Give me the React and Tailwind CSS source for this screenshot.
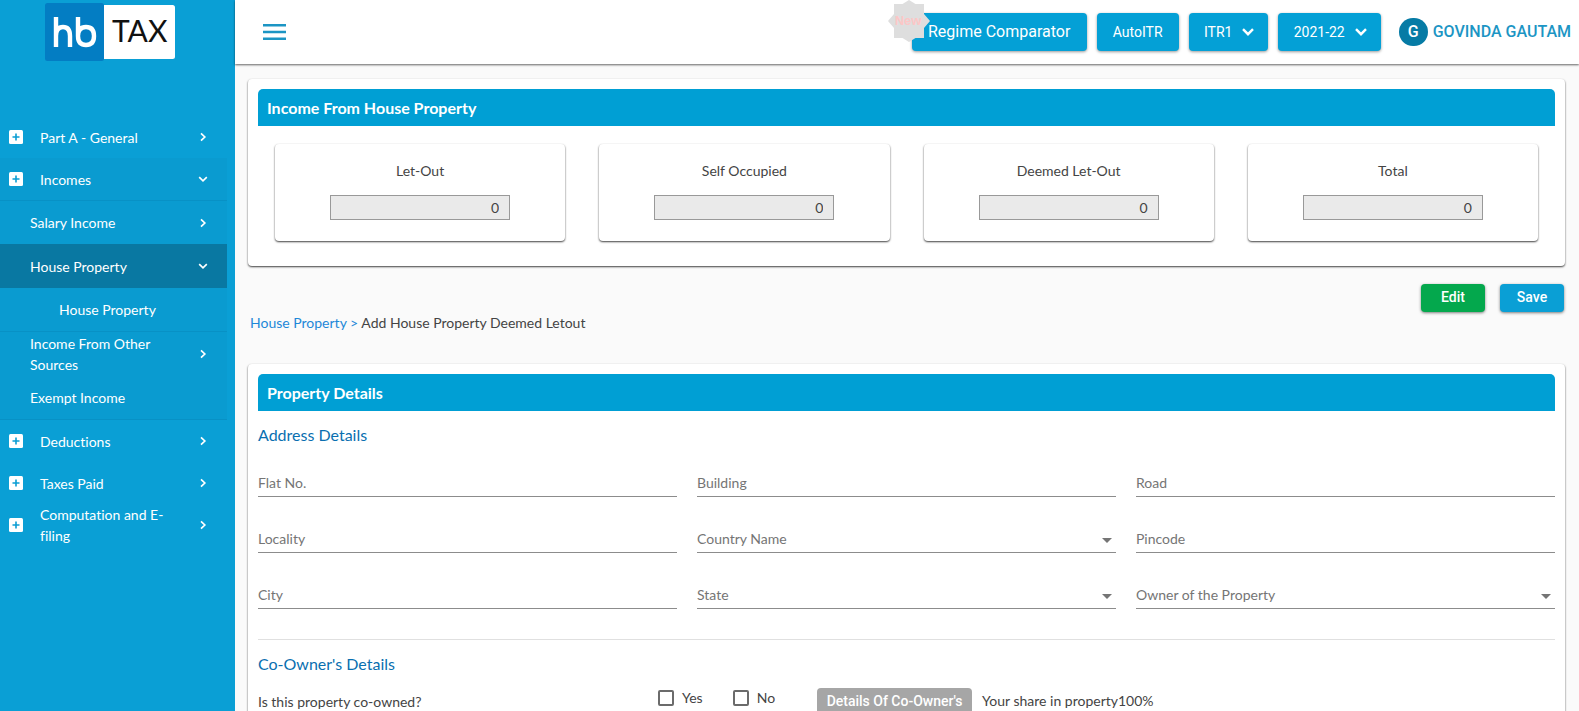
const LATO = "font-['Lato',sans-serif]";
const ROBOTO = "font-['Roboto',sans-serif]";

function PlusSquare() {
  return (
    <svg viewBox="0 0 14 14" className="h-3.5 w-3.5 shrink-0" aria-hidden="true">
      <rect width="14" height="14" rx="1.5" fill="#fff" />
      <path d="M7 3.5v7M3.5 7h7" stroke="#0a9dd3" strokeWidth="1.6" />
    </svg>
  );
}

function Chevron({ down }) {
  return (
    <svg viewBox="0 0 10 10" className="h-2.5 w-2.5 shrink-0" fill="none" stroke="#fff" strokeWidth="1.7" aria-hidden="true">
      {down ? <path d="M1.2 3.2 5 6.8l3.8-3.6" /> : <path d="M3 1.4 6.8 5 3 8.6" />}
    </svg>
  );
}

function NavItem({ label, icon, arrow, className }) {
  return (
    <li>
      <button
        type="button"
        className={"flex w-full items-center pr-[19px] text-left leading-[21px] text-white " + className}
      >
        {icon && (
          <span className="w-[31px] shrink-0">
            <PlusSquare />
          </span>
        )}
        <span className="w-[132px]">{label}</span>
        {arrow && (
          <span className="ml-auto">
            <Chevron down={arrow === "down"} />
          </span>
        )}
      </button>
    </li>
  );
}

function Sidebar() {
  return (
    <aside className="w-[235px] shrink-0 bg-[#0a9fd5]">
      <a href="#home" aria-label="hb TAX" className="mt-[3px] ml-[45px] block w-[130px]">
        <svg viewBox="0 0 130 58" className="h-[58px] w-[130px]">
          <rect x="56" y="2" width="74" height="54" rx="2.5" fill="#fff" />
          <rect width="59" height="58" rx="2.5" fill="#037dc3" />
          <g fill="none" stroke="#fff" strokeWidth="4.4">
            <path d="M11 14v30M11 33c0-6 2.500-9 7-9s7 3 7 9v11" />
            <path d="M33 14v19c0 6.500 3 9 8 9s8-3 8-9-3-9-8-9-8 3-8 9" />
          </g>
          <text x="67" y="39" fontFamily="Lato" fontWeight="400" fontSize="30" fill="#111">TAX</text>
        </svg>
      </a>
      <nav className="mt-[55px] w-[227px]">
        <ul>
          <NavItem icon label="Part A - General" arrow="right" className="h-[42px] pl-[9px]" />
          <NavItem icon label="Incomes" arrow="down" className="h-[43px] border-b border-[#0891c5] bg-[#0a9bd0] pl-[9px]" />
          <li className="border-b border-[#0891c5] bg-[#0a9bd0]">
            <ul>
              <NavItem label="Salary Income" arrow="right" className="h-[43px] pl-[30px]" />
              <NavItem label="House Property" arrow="down" className="h-[44px] bg-[#0978a2] pl-[30px]" />
              <NavItem label="House Property" className="h-[44px] border-b border-[#0891c5] pl-[59px]" />
              <NavItem label="Income From Other Sources" arrow="right" className="h-[44px] pl-[30px]" />
              <NavItem label="Exempt Income" className="h-[43px] pl-[30px]" />
            </ul>
          </li>
          <NavItem icon label="Deductions" arrow="right" className="h-[42px] pl-[9px]" />
          <NavItem icon label="Taxes Paid" arrow="right" className="h-[42px] pl-[9px]" />
          <NavItem icon label="Computation and E-filing" arrow="right" className="h-[42px] pl-[9px]" />
        </ul>
      </nav>
    </aside>
  );
}

function HeaderButton({ children, arrow, className }) {
  return (
    <button
      type="button"
      className={
        "flex h-[38px] items-center justify-center gap-2.5 rounded bg-[#04a0d6] text-white shadow-[0_1px_3px_rgba(0,0,0,0.4)] " +
        className
      }
    >
      {children}
      {arrow && (
        <svg viewBox="0 0 12 8" className="h-2 w-3" fill="none" stroke="#fff" strokeWidth="2.4" aria-hidden="true">
          <path d="M1 1.200 6 6.200l5-5" />
        </svg>
      )}
    </button>
  );
}

function Header() {
  return (
    <header className={"relative flex h-16 items-center bg-white pr-2 pl-7 shadow-[0_1px_2px_rgba(0,0,0,0.6)] " + ROBOTO}>
      <button type="button" aria-label="Toggle menu" className="h-4 w-[23px]">
        <svg viewBox="0 0 23 16" className="h-4 w-[23px]" stroke="#1c95c4" strokeWidth="2.4" aria-hidden="true">
          <path d="M0 1.200h23M0 8h23M0 14.800h23" />
        </svg>
      </button>
      <div className="ml-auto flex items-center gap-2.5">
        <div className="relative">
          <HeaderButton className="w-[175px] text-base">Regime Comparator</HeaderButton>
          <svg viewBox="-21 -21 42 42" className="absolute -top-[13px] -left-6 h-[42px] w-[42px]">
            <path
              d="M0-21 6.500-17H15V-7L21 0l-6 7V17H6.500L0 21l-6.500-4H-15V7L-21 0l6-7V-17h8.500z"
              fill="#dedede"
            />
            <text x="-1" y="4" textAnchor="middle" fontFamily="Liberation Sans" fontWeight="700" fontSize="13" fill="#fcc6c6">New</text>
          </svg>
        </div>
        <HeaderButton className="w-[82px] text-sm">AutoITR</HeaderButton>
        <HeaderButton arrow className="w-[79px] pl-0.5 text-sm">ITR1</HeaderButton>
        <HeaderButton arrow className="w-[103px] pl-0.5 text-sm">2021-22</HeaderButton>
      </div>
      <a href="#profile" className="ml-[18px] flex items-center gap-[5px] text-base font-medium text-[#1c95c4]">
        <span className="flex h-7 w-[29px] items-center justify-center rounded-full bg-[#067ba5] text-white">G</span>
        GOVINDA GAUTAM
      </a>
    </header>
  );
}

const CARD = "rounded bg-white shadow-[0_1px_2px_rgba(0,0,0,0.75)]";

function Banner({ children }) {
  return (
    <h2 className="h-[37px] rounded-t-[5px] bg-[#009fd4] px-[9px] text-base leading-[37px] font-bold text-white">{children}</h2>
  );
}

function SummaryCard({ label, id }) {
  return (
    <div className={"flex h-[97px] flex-col items-center pt-4 text-[#444] " + CARD}>
      <label htmlFor={id} className="leading-[22px]">{label}</label>
      <input
        id={id}
        readOnly
        defaultValue="0"
        className="mt-[13px] h-[25px] w-[180px] border border-[#999] bg-[#eaeaea] pr-2.5 text-right text-[#444]"
      />
    </div>
  );
}

function Field({ label, id, select }) {
  const base = "h-[30px] w-full border-b border-[#8c8c8c] bg-transparent pt-0.5 text-[#757575] outline-none";
  if (!select) {
    return <input id={id} aria-label={label} placeholder={label} className={base + " placeholder:text-[#757575]"} />;
  }
  return (
    <div className="relative">
      <select id={id} aria-label={label} className={base + " appearance-none"}>
        <option>{label}</option>
      </select>
      <svg viewBox="0 0 10 5" className="pointer-events-none absolute top-[15px] right-1 h-[5px] w-2.5" aria-hidden="true">
        <path d="M0 0h10L5 5z" fill="#757575" />
      </svg>
    </div>
  );
}

function Check({ label }) {
  return (
    <label className="flex items-center gap-2">
      <input type="checkbox" className="h-4 w-4 appearance-none rounded-[2px] border-2 border-[#6b6b6b] bg-white checked:bg-[#009fd4]" />
      {label}
    </label>
  );
}

function ActionButton({ children, className }) {
  return (
    <button
      type="button"
      className={"h-7 w-16 rounded pb-0.5 text-sm font-medium text-white shadow-[0_1px_3px_rgba(0,0,0,0.5)] " + ROBOTO + " " + className}
    >
      {children}
    </button>
  );
}

export default function App() {
  return (
    <div className={"flex h-screen overflow-hidden bg-[#fafafa] text-sm [font-variant-ligatures:none] " + LATO}>
      <Sidebar />
      <div className="min-w-0 flex-1">
        <Header />
        <main className="pt-[15px] pr-3.5 pl-[13px]">
          <section className={"p-2.5 pb-[25px] " + CARD}>
            <Banner>Income From House Property</Banner>
            <div className="mt-[18px] grid grid-cols-4 gap-[34px] px-[17px]">
              <SummaryCard id="letout" label="Let-Out" />
              <SummaryCard id="self" label="Self Occupied" />
              <SummaryCard id="deemed" label="Deemed Let-Out" />
              <SummaryCard id="total" label="Total" />
            </div>
          </section>

          <div className="mt-[18px] flex justify-end gap-[15px] pr-px">
            <ActionButton className="bg-[#04a84d]">Edit</ActionButton>
            <ActionButton className="bg-[#0a9fd5]">Save</ActionButton>
          </div>

          <p className="pl-0.5 leading-[22px] text-[#444]">
            <a href="#house-property" className="text-[#1e88d8]">House Property &gt;</a> Add House Property Deemed Letout
          </p>

          <section className={"mt-[30px] p-2.5 " + CARD}>
            <Banner>Property Details</Banner>
            <h3 className="mt-3 text-base leading-6 text-[#0a6fb0]">Address Details</h3>
            <div className="mt-5 grid grid-cols-3 gap-x-5 gap-y-[26px]">
              <Field id="flat" label="Flat No." />
              <Field id="building" label="Building" />
              <Field id="road" label="Road" />
              <Field id="locality" label="Locality" />
              <Field id="country" label="Country Name" select />
              <Field id="pincode" label="Pincode" />
              <Field id="city" label="City" />
              <Field id="state" label="State" select />
              <Field id="owner" label="Owner of the Property" select />
            </div>
            <hr className="mt-[30px] border-[#e0e0e0]" />
            <h3 className="mt-3 text-base leading-6 text-[#0a6fb0]">Co-Owner's Details</h3>
            <div className="mt-3 flex text-[#444]">
              <p className="w-[400px] pt-0.5 leading-6">Is this property co-owned?</p>
              <div className="flex h-[18px] items-center gap-[30px] pt-px">
                <Check label="Yes" />
                <Check label="No" />
              </div>
              <button
                type="button"
                className={"ml-[42px] h-7 w-[155px] rounded bg-[#a6a6a6] pb-0.5 text-sm font-medium text-white " + ROBOTO}
              >
                Details Of Co-Owner's
              </button>
              <p className="ml-2.5 pt-px leading-6">Your share in property100%</p>
            </div>
          </section>
        </main>
      </div>
    </div>
  );
}
